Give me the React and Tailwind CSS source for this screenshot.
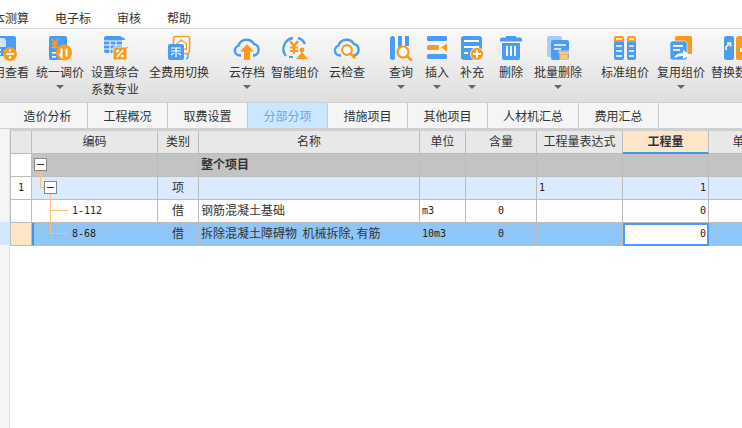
import React from "react";

const blue = "#4a9cf5";
const orange = "#fb9a1d";

const cloud = "M12 20.5 H11 a5 5 0 0 1 -1.5 -9.8 a8.5 8.5 0 0 1 15.5 -1.7 a6 6 0 0 1 0.5 11.5 h-1.5";

const Icons = {
    feiyong: (
        <>
            <rect x="6" y="1" width="23" height="20" rx="2" fill={blue} />
            <path d="M11 3 h6 l2 2 v7 h-8z" fill="#cfe5fc" />
            <rect x="8" y="14" width="6" height="2" fill="#fff" />
            <rect x="8" y="18" width="6" height="2" fill="#fff" />
            <circle cx="23" cy="19" r="7" fill={orange} />
            <rect x="19" y="18" width="8" height="2" fill="#fff" />
            <circle cx="23" cy="15.5" r="1.2" fill="#fff" />
            <circle cx="23" cy="22.5" r="1.2" fill="#fff" />
        </>
    ),
    tiaojia: (
        <>
            <rect x="7" y="1" width="18" height="24" rx="2" fill={blue} />
            <path d="M10 4 l3 4 l3 -4 M13 8 v6 M10 9 h6 M10 12 h6" stroke={orange} strokeWidth="1.8" fill="none" />
            <rect x="10" y="17" width="4" height="1.6" fill="#fff" />
            <rect x="10" y="21" width="4" height="1.6" fill="#fff" />
            <circle cx="22" cy="17.5" r="8" fill={orange} />
            <path d="M19.5 13.5 v8 l-2 -2.5 M24.5 13.5 v8" stroke="#fff" strokeWidth="2" fill="none" />
        </>
    ),
    xishu: (
        <>
            <rect x="7" y="1" width="18" height="17" rx="2" fill={blue} />
            <path d="M7 6 h18 M7 10 h18 M7 14 h18 M13 6 v12 M19 6 v12" stroke="#fff" strokeWidth="1" />
            <path d="M26 2 l2.5 3 h-5z M26 5 v5 M29 15 l-2.5 -3 h5z" fill={blue} />
            <rect x="16" y="12" width="14" height="13" rx="1.5" fill={orange} stroke="#fff" strokeWidth="0.8" />
            <path d="M20 22 l6 -7" stroke="#fff" strokeWidth="1.6" />
            <circle cx="20.5" cy="16" r="1.6" fill="#fff" />
            <circle cx="25.5" cy="21" r="1.6" fill="#fff" />
        </>
    ),
    qiehuan: (
        <>
            <rect x="12.5" y="1.5" width="16" height="17" rx="2" fill="#fff" stroke={orange} strokeWidth="1.6" />
            <path d="M20.5 5 l5 4 v5 h-10 v-5z" fill="none" stroke={orange} strokeWidth="1.4" />
            <rect x="7" y="9" width="16" height="16" rx="2" fill={blue} />
            <path d="M10 13 h10 M10 16 h10 M15 13 v9 M10 20 l3 -2 M20 20 l-3 -2" stroke="#fff" strokeWidth="1.2" fill="none" />
            <path d="M27 19 v3 a3 3 0 0 1 -2 2" stroke={blue} strokeWidth="1.4" fill="none" />
        </>
    ),
    yuncun: (
        <>
            <path d={cloud} fill="none" stroke={blue} strokeWidth="2.4" />
            <path d="M18 9 l7 7.5 h-4 v8.5 h-6 v-8.5 h-4z" fill={orange} />
        </>
    ),
    zhineng: (
        <>
            <path d="M9 21 a11 11 0 0 1 7 -18 M21 3 a11 11 0 0 1 7 6" fill="none" stroke={blue} strokeWidth="2.4" />
            <path d="M13 6 l4 5 l4 -5 M17 11 v8 M13 12.5 h8 M13 16 h8" fill="none" stroke={orange} strokeWidth="2.2" />
            <circle cx="25" cy="15" r="2.4" fill={orange} />
            <path d="M19 24 l6 -7 l6 7z" fill={orange} />
            <path d="M12 22 h4" stroke={blue} strokeWidth="2" />
        </>
    ),
    yunjian: (
        <>
            <path d={cloud} fill="none" stroke={blue} strokeWidth="2.4" />
            <circle cx="18" cy="15" r="4.8" fill="#fff" stroke={orange} strokeWidth="2.2" />
            <path d="M21.5 18.5 l4 4" stroke={orange} strokeWidth="2.6" strokeLinecap="round" />
        </>
    ),
    chaxun: (
        <>
            <rect x="7" y="1" width="5" height="24" rx="2.5" fill={blue} />
            <path d="M15 1 h4 v10 l-2 2 h-2z" fill={blue} />
            <path d="M22 1 h4 v10 h-4z" fill={blue} />
            <circle cx="20" cy="17" r="5.5" fill="#fff" stroke={orange} strokeWidth="2.2" />
            <path d="M24 21 l4 4" stroke={orange} strokeWidth="2.6" strokeLinecap="round" />
        </>
    ),
    charu: (
        <>
            <rect x="8" y="1" width="20" height="5" rx="1.5" fill={blue} />
            <rect x="8" y="10" width="12" height="5" rx="1.5" fill={orange} />
            <path d="M28 8.5 v8 l-6 -4z" fill={orange} />
            <rect x="8" y="19" width="20" height="5" rx="1.5" fill={blue} />
        </>
    ),
    buchong: (
        <>
            <rect x="7" y="1" width="21" height="24" rx="3" fill={blue} />
            <rect x="10" y="5" width="15" height="2" fill="#fff" />
            <rect x="10" y="11" width="15" height="2" fill="#fff" />
            <rect x="10" y="17" width="4" height="2" fill="#fff" />
            <circle cx="23" cy="19" r="6.5" fill={orange} stroke="#fff" strokeWidth="0.8" />
            <path d="M23 15 v8 M19 19 h8" stroke="#fff" strokeWidth="1.8" />
        </>
    ),
    shanchu: (
        <>
            <path d="M7 4 q0 -1.5 2 -1.5 h4 v-1.5 h10 v1.5 h4 q2 0 2 1.5 v2.5 h-22z" fill={blue} />
            <path d="M9 8 h18 v15 a2 2 0 0 1 -2 2 h-14 a2 2 0 0 1 -2 -2z" fill={blue} />
            <path d="M14 11 v10 M18 11 v10 M22 11 v10" stroke="#fff" strokeWidth="1.8" />
        </>
    ),
    piliang: (
        <>
            <rect x="7" y="1" width="15" height="21" rx="2" fill="#a5cdf8" />
            <rect x="11" y="5" width="18" height="20" rx="2" fill={blue} />
            <rect x="14" y="9" width="12" height="2" fill="#cfe5fc" />
            <rect x="14" y="13" width="7" height="2" fill="#cfe5fc" />
            <path d="M19 16 h10 v2 h-10z M20 18 h8 v7 h-8z" fill={orange} stroke="#fff" strokeWidth="0.5" />
            <path d="M22 19.5 v4.5 M24 19.5 v4.5 M26 19.5 v4.5" stroke="#fff" strokeWidth="0.9" />
        </>
    ),
    biaozhun: (
        <>
            <path d="M7 3 a2 2 0 0 1 2 -2 h6 a2 2 0 0 1 2 2 v4 h-10z M20 3 a2 2 0 0 1 2 -2 h5 a2 2 0 0 1 2 2 v4 h-9z" fill={orange} />
            <path d="M7 7 h10 v16 a2 2 0 0 1 -2 2 h-6 a2 2 0 0 1 -2 -2z M20 7 h9 v16 a2 2 0 0 1 -2 2 h-5 a2 2 0 0 1 -2 -2z" fill={blue} />
            <path d="M9 4 h6 M22 4 h5 M9 11 h6 M22 11 h5 M9 16 h6 M22 16 h5 M9 21 h6 M22 21 h5" stroke="#fff" strokeWidth="1.6" />
        </>
    ),
    fuyong: (
        <>
            <rect x="12" y="1" width="17" height="18" rx="1.5" fill={orange} />
            <rect x="7" y="6" width="17" height="19" rx="2.5" fill={blue} stroke="#fff" strokeWidth="0.6" />
            <rect x="10" y="10" width="10" height="1.8" fill="#fff" />
            <rect x="10" y="14" width="7" height="1.8" fill="#fff" />
            <path d="M11 23 q2 -5 9 -5 v-3 l7 5 l-7 4 v-3 q-5 0 -9 2z" fill="#fff" />
        </>
    ),
    tihuan: (
        <>
            <rect x="7" y="1" width="10" height="24" rx="2.5" fill={blue} />
            <rect x="19" y="1" width="14" height="24" rx="2.5" fill={orange} />
            <path d="M9 15 v-3 l3 -3 M10 8 h3.5 v3.5" fill="none" stroke="#fff" strokeWidth="1.6" />
            <path d="M23 13 h5 l2 4 h-7z" fill="#fff" />
        </>
    ),
};

const tools = [
    { key: "feiyong", label: "费用查看", w: "w-[48px]", ml: "-ml-[19px]" },
    { key: "tiaojia", label: "统一调价", w: "w-[48px]", ml: "ml-[7px]", caret: true },
    { key: "xishu", label: "设置综合", sub: "系数专业", w: "w-[48px]", ml: "ml-[7px]" },
    { key: "qiehuan", label: "全费用切换", w: "w-[60px]", ml: "ml-[10px]" },
    { key: "yuncun", label: "云存档", w: "w-[36px]", ml: "ml-[20px]", caret: true },
    { key: "zhineng", label: "智能组价", w: "w-[48px]", ml: "ml-[6px]" },
    { key: "yunjian", label: "云检查", w: "w-[36px]", ml: "ml-[10px]" },
    { key: "chaxun", label: "查询", w: "w-[24px]", ml: "ml-[24px]", caret: true },
    { key: "charu", label: "插入", w: "w-[24px]", ml: "ml-[12px]", caret: true },
    { key: "buchong", label: "补充", w: "w-[24px]", ml: "ml-[11px]", caret: true },
    { key: "shanchu", label: "删除", w: "w-[24px]", ml: "ml-[15px]" },
    { key: "piliang", label: "批量删除", w: "w-[48px]", ml: "ml-[11px]", caret: true },
    { key: "biaozhun", label: "标准组价", w: "w-[48px]", ml: "ml-[19px]" },
    { key: "fuyong", label: "复用组价", w: "w-[48px]", ml: "ml-[8px]", caret: true },
    { key: "tihuan", label: "替换数据", w: "w-[48px]", ml: "ml-[6px]" },
];

const tabs = [
    { label: "造价分析", w: "w-[80px]" },
    { label: "工程概况", w: "w-[80px]" },
    { label: "取费设置", w: "w-[80px]" },
    { label: "分部分项", w: "w-[80px]", active: true },
    { label: "措施项目", w: "w-[80px]" },
    { label: "其他项目", w: "w-[80px]" },
    { label: "人材机汇总", w: "w-[91px]" },
    { label: "费用汇总", w: "w-[80px]" },
];

const columns = "grid grid-cols-[21px_126px_41px_221px_46px_71px_86px_86px_60px]";

const headers = ["", "编码", "类别", "名称", "单位", "含量", "工程量表达式", "工程量", "单"];

const ToolButton = ({ item }) => (
    <div className={`${item.w} ${item.ml} shrink-0 flex flex-col items-center`}>
        <div className="w-[36px] h-[26px] mt-[6px] shrink-0">
            <svg width="36" height="26" viewBox="0 0 36 26">{Icons[item.key]}</svg>
        </div>
        <div className="mt-[2px] h-[17px] leading-[17px] whitespace-nowrap">{item.label}</div>
        {item.sub && <div className="h-[17px] leading-[17px] whitespace-nowrap">{item.sub}</div>}
        {item.caret && (
            <div className="mt-[5px] w-0 h-0 border-x-[4px] border-x-transparent border-t-[4px] border-t-[#666]"></div>
        )}
    </div>
);

const Toggle = ({ className }) => (
    <div className={`absolute w-[13px] h-[13px] bg-white border border-[#888] flex items-center justify-center ${className}`}>
        <div className="w-[7px] h-px bg-[#333]"></div>
    </div>
);

const Cell = ({ className = "", children }) => (
    <div className={`h-[23px] pb-[2px] border-r border-b border-[#bdbdbd] flex items-center relative ${className}`}>{children}</div>
);

const Num = ({ className = "", children }) => (
    <span className={`font-['DejaVu_Sans_Mono',monospace] text-[10px] text-[#222] mt-px ${className}`}>{children}</span>
);

const Row = ({ bg, head, headBg = "bg-white", code, type, name, unit, qty, expr, amount, selected }) => (
    <div className={columns}>
        <Cell className={`${headBg} justify-center`}>{head && <Num>{head}</Num>}</Cell>
        <Cell className={`${bg} ${selected ? "shadow-[inset_2px_0_0_#3f93f5]" : ""}`}>{code}</Cell>
        <Cell className={`${bg} justify-center`}>{type}</Cell>
        <Cell className={`${bg} pl-[2px]`}>{name}</Cell>
        <Cell className={`${bg} pl-[2px]`}>{unit && <Num>{unit}</Num>}</Cell>
        <Cell className={`${bg} justify-center`}>{qty && <Num>{qty}</Num>}</Cell>
        <Cell className={`${bg} pl-[2px]`}>{expr && <Num>{expr}</Num>}</Cell>
        <Cell className={`${selected ? "bg-white outline-2 -outline-offset-2 outline-[#4a9cf5]" : bg} justify-end pr-[2px]`}>
            {amount && <Num>{amount}</Num>}
        </Cell>
        <Cell className={bg}></Cell>
    </div>
);

export default function App() {
    return (
        <div className="w-[742px] h-[428px] overflow-hidden bg-white text-[12px] text-[#333] font-['Noto_Sans_CJK_SC','Noto_Sans',sans-serif]">
            {/* top menu */}
            <div className="h-[28px] flex items-center gap-[26px] pt-[8px] bg-white">
                <span className="-ml-[19px]">成本测算</span>
                <span>电子标</span>
                <span>审核</span>
                <span>帮助</span>
            </div>

            {/* ribbon */}
            <div className="h-[74px] flex overflow-hidden border-t border-[#d8d8d8] bg-linear-to-b from-[#fafafa] to-[#dedede]">
                {tools.map((item) => (
                    <ToolButton key={item.key} item={item} />
                ))}
            </div>

            {/* sheet tabs */}
            <div className="h-[27px] flex pl-[8px] bg-[#f5f5f5] border-t border-b border-[#cfcfcf]">
                {tabs.map((tab) => (
                    <div
                        key={tab.label}
                        className={`${tab.w} flex items-center justify-center border-r border-[#c9c9c9] ${tab.active ? "bg-[#cce6ff] text-[#6aa7e8]" : "text-[#333]"}`}
                    >
                        {tab.label}
                    </div>
                ))}
            </div>

            <div className="flex h-[299px]">
                {/* left strip */}
                <div className="w-[10px] shrink-0 bg-[#f5f5f5] border-r border-[#e4e4e4] flex flex-col">
                    <div className="h-[93px]"></div>
                    <div className="h-[23px] bg-[#cfe8ff]"></div>
                </div>

                {/* table */}
                <div className="flex-1 overflow-hidden border-t-2 border-[#cfcfcf]">
                    <div className="border-l border-[#bdbdbd]">
                        <div className={columns}>
                            {headers.map((h, i) => (
                                <div
                                    key={i}
                                    className={`h-[23px] pb-[2px] border-r border-b border-[#bdbdbd] flex items-center justify-center ${i === 7 ? "bg-[#fde6c8] font-bold border-b-2 border-b-[#3f93f5]" : "bg-[#e8e8e8]"}`}
                                >
                                    {h}
                                </div>
                            ))}
                        </div>

                        <div className={columns}>
                            <Cell className="bg-white"></Cell>
                            <Cell className="bg-[#c3c3c3]">
                                <Toggle className="left-[2px] top-[4px]" />
                            </Cell>
                            <Cell className="bg-[#c3c3c3]"></Cell>
                            <Cell className="bg-[#c3c3c3] pl-[2px] font-bold">整个项目</Cell>
                            <Cell className="bg-[#c3c3c3]"></Cell>
                            <Cell className="bg-[#c3c3c3]"></Cell>
                            <Cell className="bg-[#c3c3c3]"></Cell>
                            <Cell className="bg-[#c3c3c3]"></Cell>
                            <Cell className="bg-[#c3c3c3]"></Cell>
                        </div>

                        <Row
                            bg="bg-[#dceafd]"
                            head="1"
                            code={
                                <>
                                    <div className="absolute left-[8px] -top-[6px] w-[6px] h-[17px] border-l border-b border-[#fdc070]"></div>
                                    <div className="absolute left-[18px] top-[17px] h-[6px] border-l border-[#fdc070]"></div>
                                    <Toggle className="left-[12px] top-[4px]" />
                                </>
                            }
                            type="项"
                            expr="1"
                            amount="1"
                        />
                        <Row
                            bg="bg-white"
                            code={
                                <>
                                    <div className="absolute left-[18px] top-0 h-[23px] border-l border-[#fdc070]"></div>
                                    <div className="absolute left-[18px] top-[10px] w-[18px] border-t border-[#fdc070]"></div>
                                    <Num className="ml-[40px]">1-112</Num>
                                </>
                            }
                            type="借"
                            name="钢筋混凝土基础"
                            unit="m3"
                            qty="0"
                            amount="0"
                        />
                        <Row
                            bg="bg-[#90c6f6]"
                            headBg="bg-[#fde6c8]"
                            selected
                            code={
                                <>
                                    <div className="absolute left-[18px] top-0 w-[18px] h-[11px] border-l border-b border-[#fdc070]"></div>
                                    <Num className="ml-[40px]">8-68</Num>
                                </>
                            }
                            type="借"
                            name={"拆除混凝土障碍物\u00a0\u00a0机械拆除,\u00a0有筋"}
                            unit="10m3"
                            qty="0"
                            amount="0"
                        />
                    </div>
                </div>
            </div>
        </div>
    );
}
